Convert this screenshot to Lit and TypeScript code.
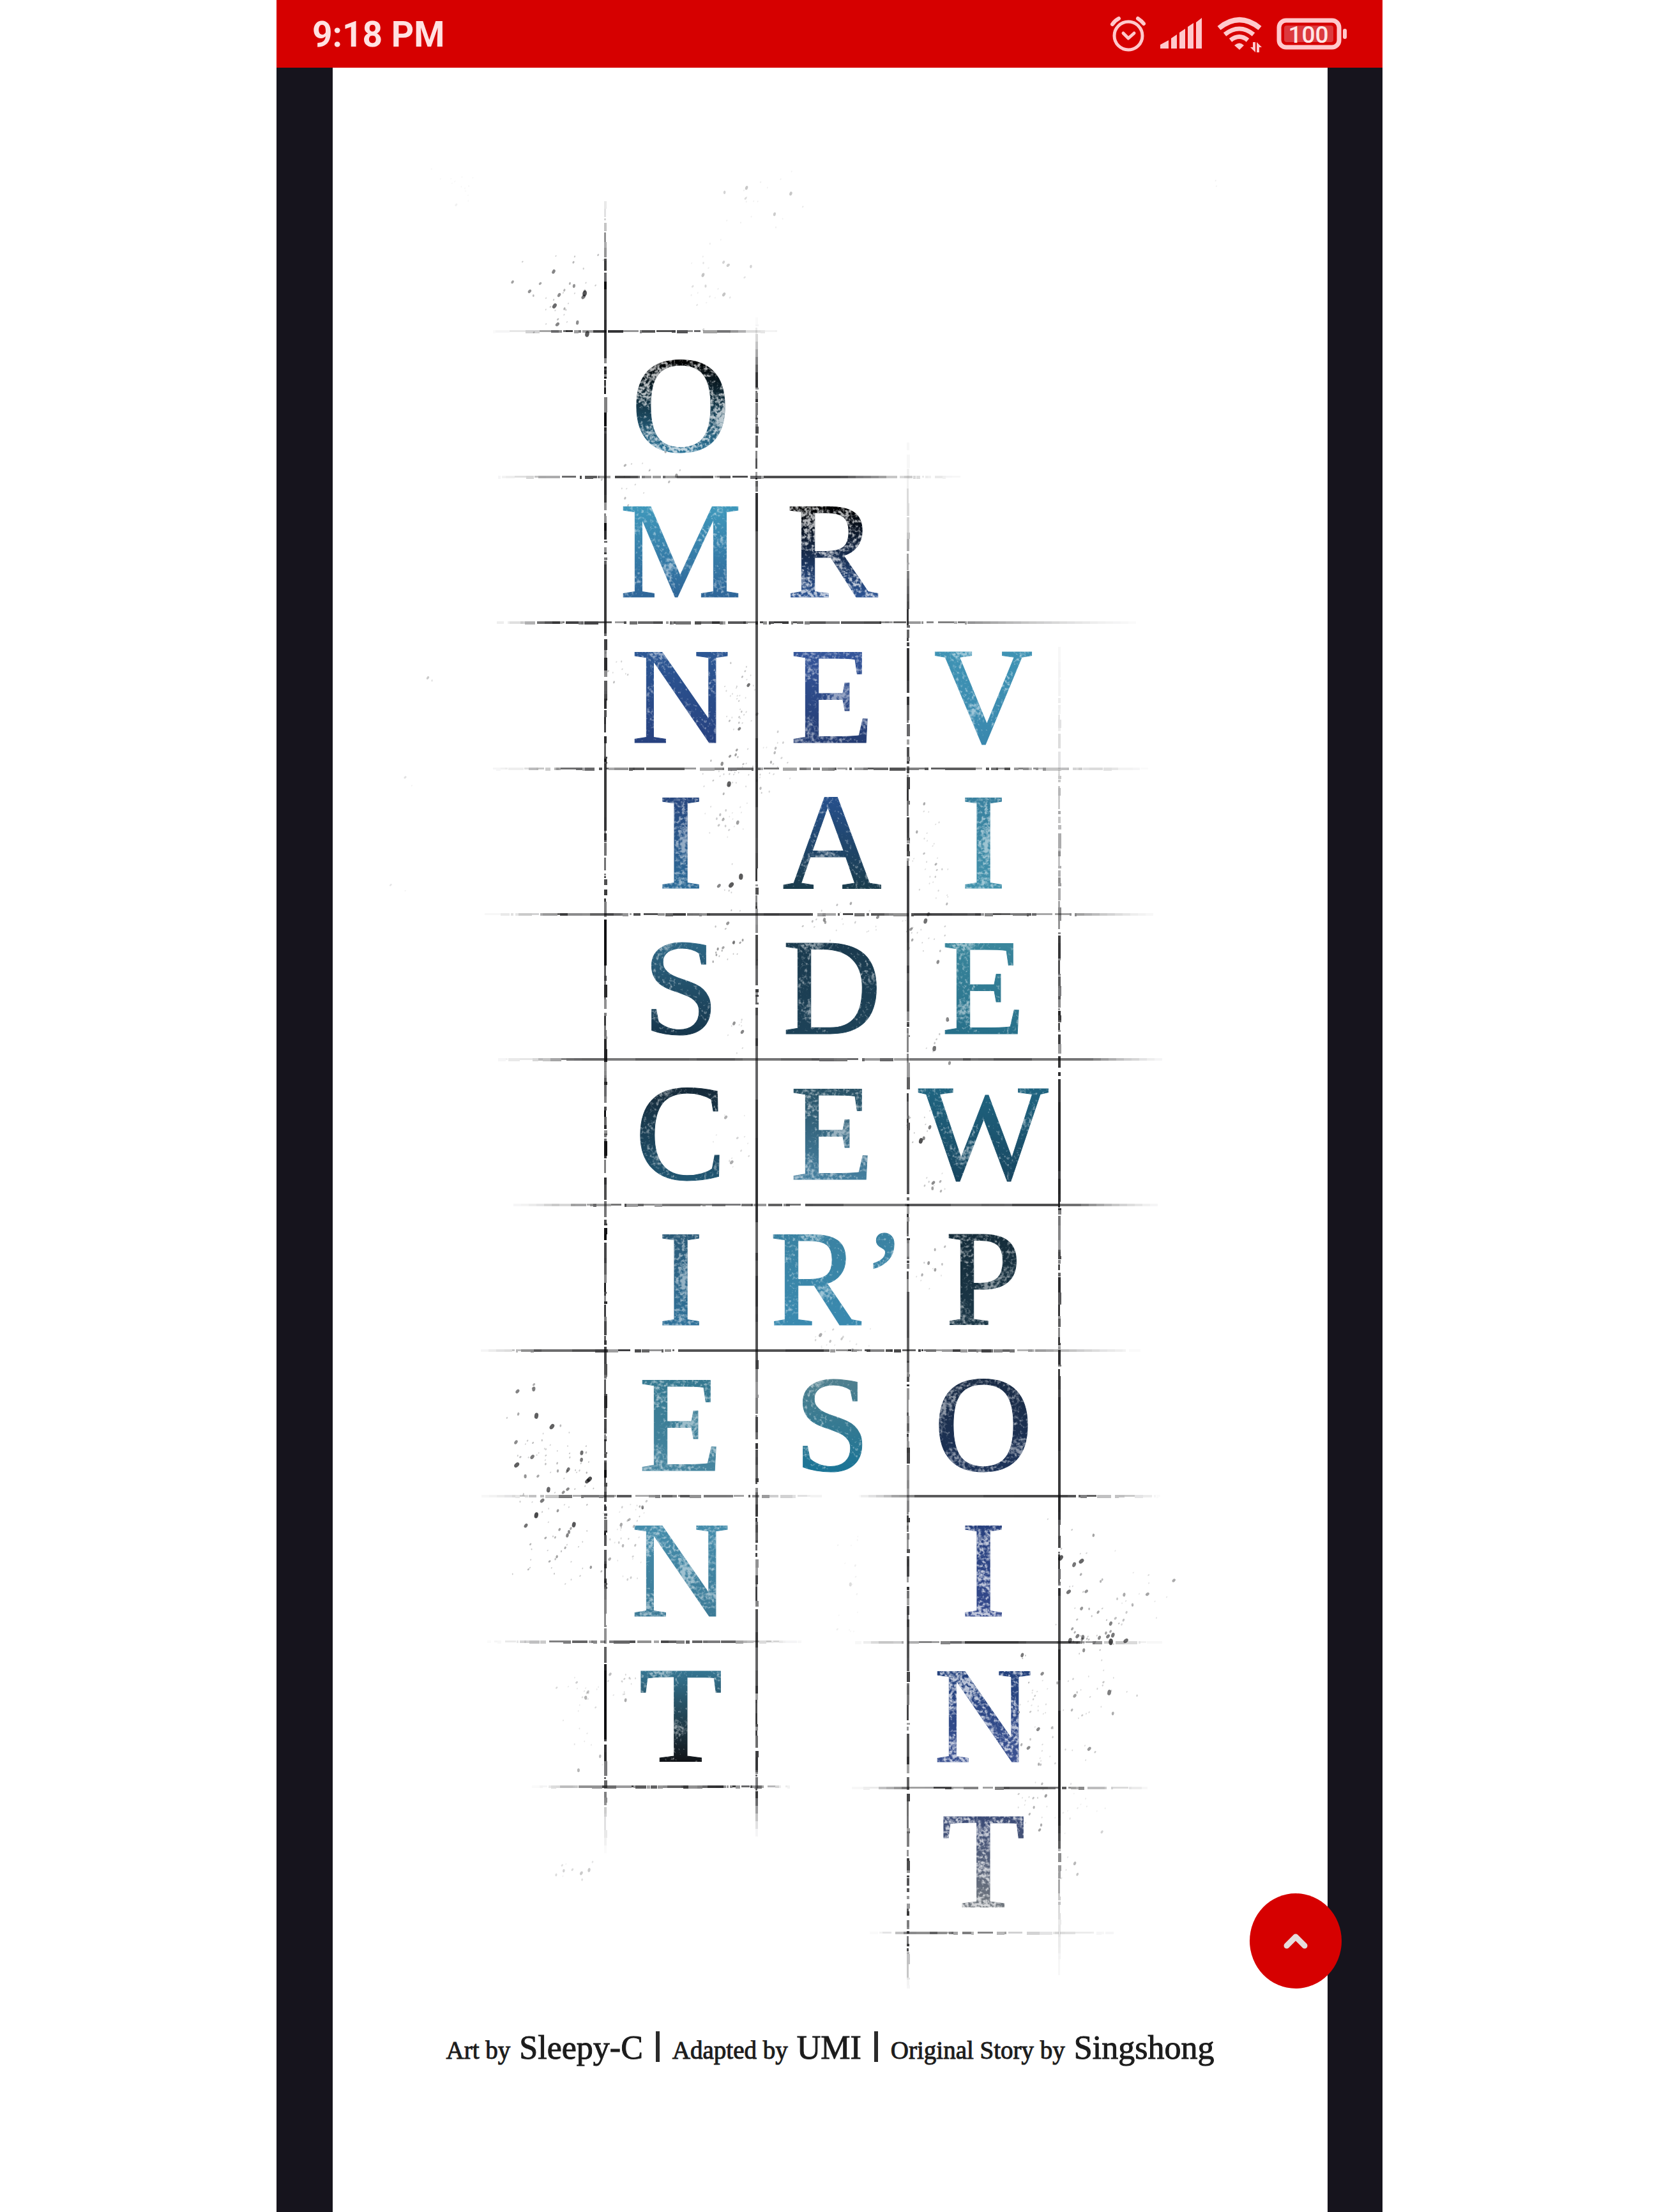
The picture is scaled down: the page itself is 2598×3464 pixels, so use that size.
import { LitElement, html, svg, css } from "lit";
import { customElement } from "lit/decorators.js";
import { classMap } from "lit/directives/class-map.js";
import { styleMap } from "lit/directives/style-map.js";

type Wear = "light" | "medium" | "heavy";
type Letter = [text: string, from: string, to: string, wear: Wear];

/** One entry per column of the title; `skip` is the number of empty rows above it. */
const COLUMNS: { skip: number; letters: Letter[] }[] = [
  {
    skip: 0,
    letters: [
      ["O", "#000000", "#2c7498", "heavy"],
      ["M", "#3f98bb", "#2e6598", "light"],
      ["N", "#2c5794", "#27417f", "light"],
      ["I", "#27477f", "#2d6c98", "medium"],
      ["S", "#2d6684", "#16364c", "light"],
      ["C", "#152a3a", "#205672", "light"],
      ["I", "#2a5a78", "#30729a", "medium"],
      ["E", "#347890", "#4786a0", "medium"],
      ["N", "#458dac", "#3c7a96", "medium"],
      ["T", "#347490", "#101216", "light"],
    ],
  },
  {
    skip: 1,
    letters: [
      ["R", "#000000", "#2c5494", "heavy"],
      ["E", "#34559a", "#243c72", "medium"],
      ["A", "#26508c", "#1a3c4c", "light"],
      ["D", "#1a3a4e", "#1d4258", "light"],
      ["E", "#285266", "#4680a0", "medium"],
      ["R’", "#3a82a2", "#3a8ab0", "light"],
      ["S", "#4f7f8e", "#1a7496", "light"],
    ],
  },
  {
    skip: 2,
    letters: [
      ["V", "#3f93b4", "#3a88ae", "light"],
      ["I", "#38809e", "#4292ac", "medium"],
      ["E", "#3a869c", "#27708a", "light"],
      ["W", "#1f6480", "#184660", "light"],
      ["P", "#142c3a", "#1c3848", "medium"],
      ["O", "#1a2c46", "#1c3258", "medium"],
      ["I", "#27407e", "#34498c", "heavy"],
      ["N", "#22407c", "#3c5292", "heavy"],
      ["T", "#3a4a76", "#72787e", "heavy"],
    ],
  },
];

const COL = 237;
const ROW = 228;

/** A ruled line: fades in between a and b, is full between b and c, fades out until d. */
interface Rule {
  at: number;
  a: number;
  b: number;
  c: number;
  d: number;
  ink: number;
  gaps: number;
}

const VERTICALS: Rule[] = [
  { at: 0, a: -240, b: -110, c: 2260, d: 2395, ink: 1, gaps: 0.14 },
  { at: COL, a: -40, b: 70, c: 2290, d: 2365, ink: 0.85, gaps: 0.06 },
  { at: 2 * COL, a: 120, b: 440, c: 2530, d: 2610, ink: 0.85, gaps: 0.09 },
  { at: 3 * COL, a: 400, b: 960, c: 2330, d: 2615, ink: 0.9, gaps: 0.08 },
];

const HORIZONTALS: Rule[] = [
  { at: -2, a: -200, b: -60, c: 175, d: 300, ink: 0.85, gaps: 0.2 },
  { at: 226, a: -205, b: -50, c: 370, d: 600, ink: 0.75, gaps: 0.14 },
  { at: 454, a: -205, b: -80, c: 480, d: 900, ink: 0.85, gaps: 0.14 },
  { at: 683, a: -215, b: -50, c: 640, d: 900, ink: 0.75, gaps: 0.16 },
  { at: 911, a: -205, b: -70, c: 700, d: 890, ink: 0.8, gaps: 0.08 },
  { at: 1138, a: -225, b: -40, c: 760, d: 900, ink: 0.7, gaps: 0.06 },
  { at: 1366, a: -180, b: 0, c: 740, d: 900, ink: 0.75, gaps: 0.03 },
  { at: 1594, a: -215, b: -100, c: 600, d: 890, ink: 0.8, gaps: 0.06 },
  { at: 1822, a: -225, b: -60, c: 225, d: 370, ink: 0.7, gaps: 0.18 },
  { at: 1822, a: 370, b: 490, c: 760, d: 900, ink: 0.75, gaps: 0.06 },
  { at: 2050, a: -205, b: -70, c: 190, d: 340, ink: 0.75, gaps: 0.2 },
  { at: 2051, a: 370, b: 490, c: 740, d: 900, ink: 0.8, gaps: 0.16 },
  { at: 2277, a: -135, b: -10, c: 235, d: 305, ink: 0.85, gaps: 0.18 },
  { at: 2279, a: 370, b: 480, c: 720, d: 885, ink: 0.8, gaps: 0.18 },
  { at: 2506, a: 405, b: 480, c: 560, d: 870, ink: 0.65, gaps: 0.16 },
];

/** Ink spatter: centre, spread, count, largest radius, strength. */
const SPATTER: [number, number, number, number, number, number, number][] = [
  [-75, -55, 60, 60, 40, 3, 0.7],
  [-225, -230, 40, 25, 14, 2, 0.1],
  [155, -85, 60, 80, 24, 2, 0.25],
  [245, -205, 60, 50, 20, 2, 0.25],
  [65, 225, 60, 40, 18, 3, 0.6],
  [20, 530, 20, 25, 9, 3, 0.6],
  [210, 600, 22, 90, 40, 2, 0.6],
  [210, 690, 60, 30, 30, 3, 0.7],
  [190, 760, 30, 50, 22, 2, 0.4],
  [195, 890, 20, 60, 14, 3, 0.7],
  [200, 960, 40, 24, 14, 3, 0.9],
  [205, 1100, 20, 30, 10, 2, 0.5],
  [260, 660, 30, 60, 16, 2, 0.4],
  [390, 920, 80, 30, 26, 2, 0.5],
  [510, 860, 30, 110, 36, 2, 0.5],
  [505, 945, 30, 20, 16, 3, 0.7],
  [525, 1120, 25, 40, 10, 3, 0.7],
  [490, 1240, 20, 30, 12, 3, 0.8],
  [515, 1330, 20, 30, 10, 2, 0.5],
  [205, 1260, 40, 40, 14, 2, 0.35],
  [515, 1460, 30, 30, 12, 2, 0.5],
  [360, 1580, 50, 30, 18, 2, 0.35],
  [-95, 1750, 60, 90, 50, 3, 0.7],
  [-45, 1780, 24, 60, 16, 4, 1],
  [-70, 1890, 60, 70, 42, 3, 0.8],
  [35, 1890, 35, 60, 34, 2, 0.4],
  [55, 1845, 6, 8, 4, 4, 0.9],
  [390, 1960, 30, 90, 16, 2, 0.15],
  [740, 1960, 40, 90, 30, 3, 0.7],
  [765, 2040, 50, 24, 28, 4, 0.9],
  [830, 1980, 50, 70, 20, 2, 0.4],
  [656, 2073, 6, 6, 3, 4, 1],
  [670, 2160, 30, 80, 40, 2, 0.5],
  [760, 2160, 60, 80, 32, 3, 0.6],
  [-30, 2130, 40, 40, 24, 2, 0.35],
  [30, 2120, 16, 20, 12, 3, 0.6],
  [-30, 2220, 25, 40, 8, 2, 0.35],
  [670, 2310, 25, 40, 22, 2, 0.5],
  [740, 2310, 40, 40, 14, 2, 0.25],
  [-60, 2410, 35, 20, 10, 2, 0.25],
  [725, 2410, 20, 30, 6, 2, 0.35],
  [-270, 545, 20, 8, 3, 2, 0.3],
  [-300, 700, 20, 10, 2, 2, 0.2],
  [-320, 865, 20, 10, 2, 2, 0.2],
  [955, -230, 6, 12, 2, 2, 0.2],
];

/** Small seeded generator, so that the worn look is the same on every load. */
function generator(seed: number): () => number {
  let s = seed;
  return () => {
    s = (s * 1664525 + 1013904223) % 4294967296;
    return s / 4294967296;
  };
}

function strength(rule: Rule, p: number): number {
  if (p < rule.b) return Math.max(0, (p - rule.a) / (rule.b - rule.a)) ** 2;
  if (p > rule.c) return Math.max(0, (rule.d - p) / (rule.d - rule.c)) ** 2;
  return 1;
}

function drawRule(rule: Rule, vertical: boolean, seed: number) {
  const rnd = generator(seed * 7919 + 17);
  const parts = [];
  let p = rule.a;
  let rough = Math.round(rnd() * 12);
  let tone = 1;
  while (p < rule.d) {
    if (rough === 0) {
      if (rnd() < rule.gaps * 1.2) rough = 6 + Math.round(rnd() * 14);
      if (rnd() < 0.2) tone = 0.75 + rnd() * 0.25;
    }
    const len = rough > 0 ? 3 + Math.round(rnd() ** 2 * 22) : 12;
    const end = Math.min(rule.d, p + len);
    const jitter = rough > 0 ? 0.45 + 0.55 * rnd() : tone;
    const o = rule.ink * strength(rule, (p + end) / 2) * jitter;
    const thick = rough > 0 ? 3 + Math.round(rnd() * 2) : 4;
    if (o > 0.02) {
      parts.push(
        vertical
          ? svg`<rect x=${rule.at - 2} y=${p} width=${thick} height=${end - p} opacity=${o.toFixed(2)} />`
          : svg`<rect x=${p} y=${rule.at - 2} width=${end - p} height=${thick} opacity=${o.toFixed(2)} />`
      );
    }
    p = end;
    if (rough > 0) {
      if (rnd() < 0.35) p += 1 + Math.round(rnd() ** 2 * 6);
      rough -= 1;
    }
  }
  return parts;
}

function drawSpatter() {
  const rnd = generator(4242);
  return SPATTER.flatMap(([cx, cy, sx, sy, count, radius, alpha]) =>
    Array.from({ length: count }, () => {
      const x = cx + (rnd() + rnd() - 1) * sx * 1.3;
      const y = cy + (rnd() + rnd() - 1) * sy * 1.3;
      const size = rnd() ** 4;
      const r = 0.9 + size * (radius - 0.6);
      const o = alpha * (0.25 + 0.75 * size);
      const turn = `rotate(${Math.round(rnd() * 50)} ${x.toFixed(1)} ${y.toFixed(1)})`;
      return svg`<ellipse cx=${x.toFixed(1)} cy=${y.toFixed(1)} rx=${r.toFixed(1)} ry=${(r * 1.5).toFixed(1)} opacity=${o.toFixed(2)} transform=${turn} />`;
    })
  );
}

@customElement("status-bar")
export class StatusBar extends LitElement {
  static styles = css`
    :host {
      display: flex;
      align-items: center;
      justify-content: space-between;
      height: 106px;
      padding: 0 56px;
      background: #d60000;
      color: #ffe2e2;
      font-family: Roboto, "Liberation Sans", sans-serif;
    }
    .time {
      padding-top: 2px;
      font-size: 55px;
      font-weight: 700;
      line-height: 64px;
    }
    .icons {
      display: flex;
      align-items: center;
      gap: 22px;
      color: #ffc9cc;
    }
    .icon {
      display: block;
      height: 60px;
    }
    .level {
      font-family: Roboto, "Liberation Sans", sans-serif;
      font-size: 37px;
      font-weight: 500;
      fill: #ffe6e6;
    }
  `;

  render() {
    return html`
      <time class="time">9:18 PM</time>
      <div class="icons">
        <svg class="icon" viewBox="0 0 56 60" width="56" role="img" aria-label="Alarm set">
          <g fill="none" stroke="currentColor" stroke-linecap="round" stroke-linejoin="round">
            <circle cx="29" cy="33" r="22" stroke-width="5" />
            <path d="M21 29l8 8 9-8" stroke-width="5" />
            <path d="M4 15Q8 9 14 6" stroke-width="6" />
            <path d="M44 6Q50 10 53 14" stroke-width="6" />
          </g>
        </svg>
        <svg class="icon" viewBox="0 0 67 60" width="67" role="img" aria-label="Signal strength">
          <path
            fill="currentColor"
            d="M1 53V47L14 40V53ZM18 53V37L27 31V53ZM31 53V28L40 22V53ZM44 53V19L53 13V53ZM57 53V12L66 5V53Z"
          />
        </svg>
        <svg class="icon" viewBox="0 0 72 60" width="72" role="img" aria-label="Wi-Fi">
          <g fill="none" stroke="currentColor">
            <path d="M4 21Q36-5 68 21" stroke-width="8" />
            <path d="M13 31Q36 13 58 31" stroke-width="7" />
            <path d="M22 40Q36 29 49 40" stroke-width="7" />
          </g>
          <path fill="currentColor" d="M28 48Q36 41 43 48L36 55Z" />
          <path fill="currentColor" d="M57 43h4v16L53 51h4ZM63 59V43L71 51h-4v8Z" />
        </svg>
        <svg class="icon" viewBox="0 0 110 60" width="110" role="img" aria-label="Battery">
          <rect x="4" y="9" width="94" height="42" rx="11" fill="none" stroke="currentColor" stroke-width="7" />
          <rect x="12" y="17" width="77" height="26" rx="4" fill="#dc3a3e" />
          <rect x="104" y="22" width="6" height="16" rx="3" fill="currentColor" />
          <text class="level" x="50" y="44" text-anchor="middle">100</text>
        </svg>
      </div>
    `;
  }
}

@customElement("title-art")
export class TitleArt extends LitElement {
  static styles = css`
    :host {
      display: block;
      width: max-content;
    }
    .title {
      position: relative;
      display: flex;
      margin: 0;
      font-family: "Liberation Serif", "Times New Roman", serif;
      font-size: 216px;
      font-weight: 400;
      line-height: 228px;
    }
    .column {
      display: flex;
      flex-direction: column;
      width: 237px;
    }
    .blank {
      height: 228px;
    }
    .letter {
      height: 228px;
      text-align: center;
      white-space: nowrap;
      color: transparent;
      background: linear-gradient(var(--from) 20%, var(--to) 82%);
      background-clip: text;
      -webkit-background-clip: text;
      -webkit-text-stroke: 1px transparent;
    }
    .marked {
      padding-left: 20px;
    }
    .light {
      filter: url(#wear-light);
    }
    .medium {
      filter: url(#wear-medium);
    }
    .heavy {
      filter: url(#wear-heavy);
    }
    .rules {
      position: absolute;
      inset: 0;
      width: 100%;
      height: 100%;
      overflow: visible;
      fill: #0c0c0e;
      pointer-events: none;
    }
  `;

  private wearFilter(id: string, seed: number, threshold: number, cover: number) {
    const gain = 6;
    return svg`
      <filter id=${id} x="0" y="0" width="1" height="1" color-interpolation-filters="sRGB">
        <feTurbulence type="fractalNoise" baseFrequency="0.2" numOctaves="3" seed=${seed} result="fine" />
        <feTurbulence type="fractalNoise" baseFrequency="0.018" numOctaves="2" seed=${seed + 5} result="broad" />
        <feComposite in="fine" in2="broad" operator="arithmetic" k1="0" k2="0.5" k3="0.5" k4="0" />
        <feColorMatrix type="matrix" values="0 0 0 0 1  0 0 0 0 1  0 0 0 0 1  ${gain} 0 0 0 ${-gain * threshold}" />
        <feComponentTransfer result="flecks">
          <feFuncA type="linear" slope=${cover} />
        </feComponentTransfer>
        <feComposite in="flecks" in2="SourceAlpha" operator="in" result="inside" />
        <feMerge>
          <feMergeNode in="SourceGraphic" />
          <feMergeNode in="inside" />
        </feMerge>
      </filter>
    `;
  }

  render() {
    return html`
      <h1 class="title" aria-label="Omniscient Reader’s Viewpoint">
        <svg class="rules" viewBox="0 0 ${3 * COL} ${11 * ROW}" aria-hidden="true">
          <defs>
            ${this.wearFilter("wear-light", 3, 0.52, 0.5)}
            ${this.wearFilter("wear-medium", 11, 0.48, 0.5)}
            ${this.wearFilter("wear-heavy", 23, 0.46, 0.7)}
          </defs>
          ${VERTICALS.map((r, i) => drawRule(r, true, i + 1))}
          ${HORIZONTALS.map((r, i) => drawRule(r, false, i + 20))}
          ${drawSpatter()}
        </svg>
        ${COLUMNS.map(
          (column) => html`
            <span class="column">
              ${Array.from({ length: column.skip }, () => html`<span class="blank"></span>`)}
              ${column.letters.map(
                ([text, from, to, wear]) => html`<span
                  class=${classMap({ letter: true, [wear]: true, marked: text.length > 1 })}
                  style=${styleMap({ "--from": from, "--to": to })}
                  >${text}</span
                >`
              )}
            </span>
          `
        )}
      </h1>
    `;
  }
}

@customElement("app-root")
export class AppRoot extends LitElement {
  static styles = css`
    :host {
      display: block;
      min-height: 100vh;
      background: #ffffff;
    }
    .screen {
      position: relative;
      display: flex;
      flex-direction: column;
      width: calc(100% * 2 / 3);
      min-height: 100vh;
      margin: 0 auto;
      background: #16141d;
    }
    .page {
      flex: 1;
      display: flex;
      flex-direction: column;
      align-items: center;
      gap: 146px;
      margin: 0 86px 0 88px;
      padding: 415px 0 200px;
      background: #ffffff;
    }
    .art {
      padding-left: 6px;
    }
    .credits {
      display: flex;
      align-items: baseline;
      justify-content: center;
      margin: 0;
      color: #1c1c1c;
      font-family: "Liberation Serif", "Times New Roman", serif;
      font-size: 39px;
      line-height: 64px;
      white-space: nowrap;
      -webkit-text-stroke: 1px #1c1c1c;
    }
    .credit + .credit::before {
      content: "";
      display: inline-block;
      width: 6px;
      height: 48px;
      margin: 0 20px;
      background: #2a2a2a;
      vertical-align: -5px;
    }
    .name {
      margin-left: 14px;
      font-size: 52px;
    }
    .top {
      position: absolute;
      right: 64px;
      bottom: 350px;
      display: grid;
      place-items: center;
      width: 144px;
      height: 149px;
      padding: 0;
      border: 0;
      border-radius: 50%;
      background: #d60000;
      cursor: pointer;
    }
  `;

  private toTop() {
    window.scrollTo({ top: 0, behavior: "smooth" });
  }

  render() {
    const credits = [
      ["Art by", "Sleepy-C"],
      ["Adapted by", "UMI"],
      ["Original Story by", "Singshong"],
    ];
    return html`
      <div class="screen">
        <status-bar></status-bar>
        <main class="page">
          <title-art class="art"></title-art>
          <p class="credits">
            ${credits.map(
              ([role, name]) => html`<span class="credit">${role}<span class="name">${name}</span></span>`
            )}
          </p>
        </main>
        <button class="top" type="button" aria-label="Back to top" @click=${this.toTop}>
          <svg viewBox="0 0 40 28" width="40" height="28" aria-hidden="true">
            <path d="M6 21L20 7L34 21" fill="none" stroke="#e6dcdc" stroke-width="9" stroke-linejoin="round" stroke-linecap="round" />
          </svg>
        </button>
      </div>
    `;
  }
}
